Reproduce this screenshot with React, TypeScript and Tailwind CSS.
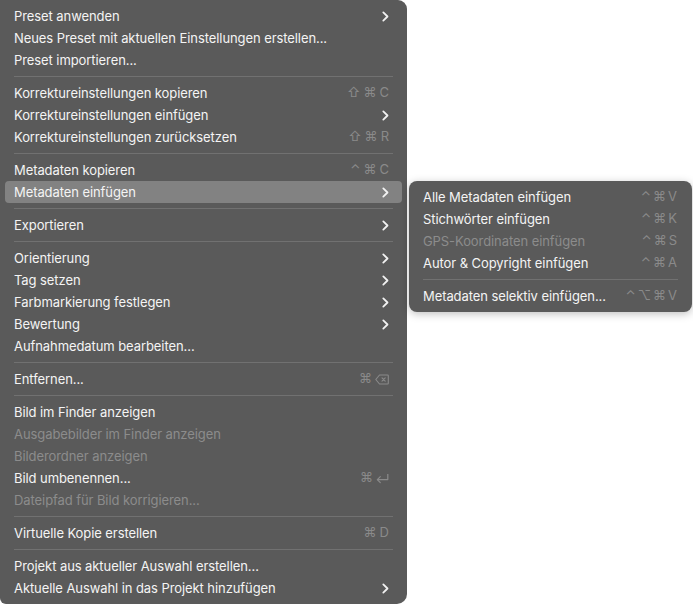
import React from "react";

type Item =
  | { sep: true }
  | { sep?: false; label: string; shortcut?: string; sub?: boolean; disabled?: boolean; active?: boolean };

const main: Item[] = [
  { label: "Preset anwenden", sub: true },
  { label: "Neues Preset mit aktuellen Einstellungen erstellen..." },
  { label: "Preset importieren..." },
  { sep: true },
  { label: "Korrektureinstellungen kopieren", shortcut: "⇧⌘C" },
  { label: "Korrektureinstellungen einfügen", sub: true },
  { label: "Korrektureinstellungen zurücksetzen", shortcut: "⇧⌘R" },
  { sep: true },
  { label: "Metadaten kopieren", shortcut: "⌃⌘C" },
  { label: "Metadaten einfügen", sub: true, active: true },
  { sep: true },
  { label: "Exportieren", sub: true },
  { sep: true },
  { label: "Orientierung", sub: true },
  { label: "Tag setzen", sub: true },
  { label: "Farbmarkierung festlegen", sub: true },
  { label: "Bewertung", sub: true },
  { label: "Aufnahmedatum bearbeiten..." },
  { sep: true },
  { label: "Entfernen...", shortcut: "⌘⌫" },
  { sep: true },
  { label: "Bild im Finder anzeigen" },
  { label: "Ausgabebilder im Finder anzeigen", disabled: true },
  { label: "Bilderordner anzeigen", disabled: true },
  { label: "Bild umbenennen...", shortcut: "⌘↩" },
  { label: "Dateipfad für Bild korrigieren...", disabled: true },
  { sep: true },
  { label: "Virtuelle Kopie erstellen", shortcut: "⌘D" },
  { sep: true },
  { label: "Projekt aus aktueller Auswahl erstellen..." },
  { label: "Aktuelle Auswahl in das Projekt hinzufügen", sub: true },
];

const subItems: Item[] = [
  { label: "Alle Metadaten einfügen", shortcut: "⌃⌘V" },
  { label: "Stichwörter einfügen", shortcut: "⌃⌘K" },
  { label: "GPS-Koordinaten einfügen", shortcut: "⌃⌘S", disabled: true },
  { label: "Autor & Copyright einfügen", shortcut: "⌃⌘A" },
  { sep: true },
  { label: "Metadaten selektiv einfügen...", shortcut: "⌃⌥⌘V" },
];

function Chevron() {
  return (
    <svg width="7" height="11" viewBox="0 0 7 11" className="block">
      <polyline points="1.3,1.4 5.5,5.5 1.3,9.6" fill="none" stroke="#f2f2f2" strokeWidth="1.8" strokeLinecap="round" strokeLinejoin="round" />
    </svg>
  );
}

function Key({ k }: { k: string }) {
  if (k === "⌫") {
    return (
      <svg width="14" height="11" viewBox="0 0 14 11" className="block">
        <path d="M4.5 1 H12.5 A0.8 0.8 0 0 1 13.3 1.8 V9.2 A0.8 0.8 0 0 1 12.5 10 H4.5 L0.8 5.5 Z" fill="none" stroke="#8a8a8a" strokeWidth="1.1" strokeLinejoin="round" />
        <path d="M7 3.8 L10.2 7.2 M10.2 3.8 L7 7.2" stroke="#8a8a8a" strokeWidth="1.1" strokeLinecap="round" />
      </svg>
    );
  }
  if (k === "↩") {
    return (
      <svg width="13" height="11" viewBox="0 0 13 11" className="block">
        <path d="M11.8 1 V6.6 H1.5" fill="none" stroke="#8a8a8a" strokeWidth="1.2" strokeLinejoin="round" />
        <path d="M4.3 3.6 L1.3 6.6 L4.3 9.6" fill="none" stroke="#8a8a8a" strokeWidth="1.2" strokeLinecap="round" strokeLinejoin="round" />
      </svg>
    );
  }
  return <span>{k}</span>;
}

function Shortcut({ s, wide }: { s: string; wide: boolean }) {
  return (
    <span
      className={`flex items-center text-[13px] text-[#8a8a8a] ${wide ? "gap-[3px]" : "gap-[2px]"}`}
      style={{ fontFamily: "Inter, 'DejaVu Sans', sans-serif" }}
    >
      {Array.from(s).map((k, i) => (
        <Key key={i} k={k} />
      ))}
    </span>
  );
}

function Menu({ items, wide, prRight }: { items: Item[]; wide: boolean; prRight: string }) {
  return (
    <>
      {items.map((it, i) =>
        it.sep ? (
          <div key={i} className="h-[11px] flex items-center mx-[14px]">
            <div className="h-px w-full bg-[#717171]" />
          </div>
        ) : (
          <div
            key={i}
            className={`h-[22px] mx-[5px] pl-[9px] ${prRight} flex items-center justify-between rounded-[4px] ${
              it.active ? "bg-[#828282]" : ""
            }`}
          >
            <span
              className={`text-[13px] leading-none tracking-[-0.08px] ${
                it.disabled ? "text-[#8c8c8c]" : "text-[#f4f4f4]"
              }`}
            >
              {it.label}
            </span>
            {it.sub ? <Chevron /> : it.shortcut ? <Shortcut s={it.shortcut} wide={wide} /> : null}
          </div>
        )
      )}
    </>
  );
}

export default function App() {
  return (
    <div
      className="relative w-[693px] h-[604px] bg-white overflow-hidden"
      style={{ fontFamily: "Inter, 'Noto Sans', sans-serif" }}
    >
      <div className="w-[407px] h-[604px] bg-[#5a5a5a] rounded-tr-[9px] rounded-br-[10px] rounded-bl-[6px] py-[5px] flex flex-col">
        <Menu items={main} wide={true} prRight="pr-[13px]" />
      </div>
      <div className="absolute left-[409px] top-[181px] w-[283px] bg-[#5a5a5a] rounded-[8px] py-[5px] flex flex-col shadow-[0_2px_8px_rgba(0,0,0,0.25)]">
        <Menu items={subItems} wide={false} prRight="pr-[10px]" />
      </div>
    </div>
  );
}
